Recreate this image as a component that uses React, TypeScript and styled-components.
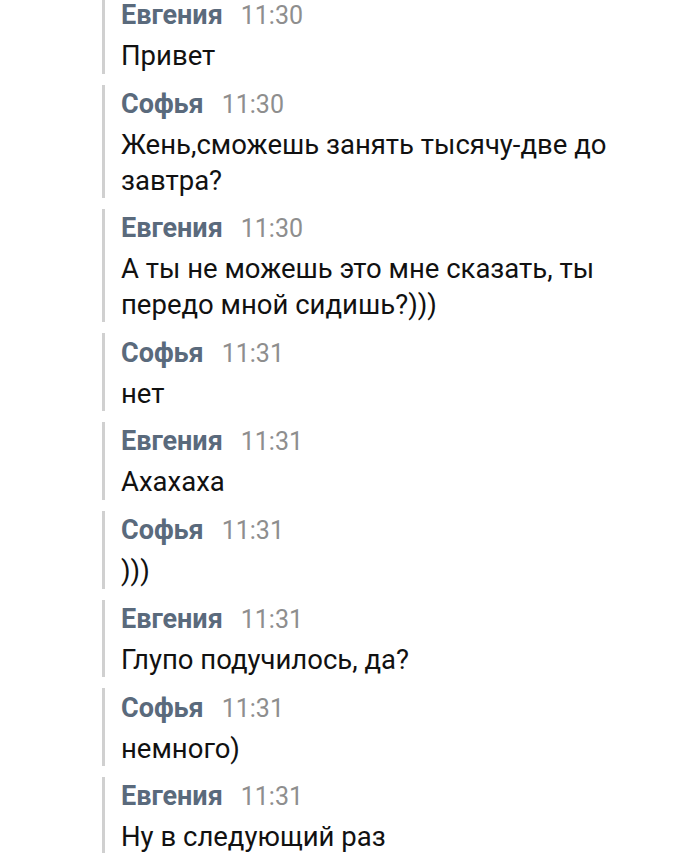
import React from "react";
import styled, { createGlobalStyle } from "styled-components";

const Global = createGlobalStyle`
  html, body { margin: 0; padding: 0; background: #ffffff; }
  body { font-family: Roboto, "Noto Sans", "Liberation Sans", sans-serif; overflow: hidden; }
`;

const Page = styled.div`
  width: 700px;
  height: 853px;
  overflow: hidden;
  background: #ffffff;
`;

const List = styled.div`
  display: flex;
  flex-direction: column;
  gap: 11px;
  padding-left: 102px;
  margin-top: -4px;
`;

const Message = styled.div`
  display: flex;
  flex-direction: column;
  border-left: 3px solid #d0d0d0;
  padding: 4.25px 0 0 16px;
  width: 520px;
`;

const Header = styled.div`
  display: flex;
  align-items: baseline;
  gap: 18px;
  height: 30px;
  line-height: 30px;
`;

const Name = styled.span`
  font-weight: 700;
  font-size: 27px;
  color: #5a6a7c;
`;

const Time = styled.span`
  font-weight: 400;
  font-size: 25px;
  color: #8e8e8e;
`;

const Text = styled.div`
  margin-top: 8px;
  font-size: 27.5px;
  line-height: 35.5px;
  color: #111111;
`;

type Msg = { name: string; time: string; text: string };

const messages: Msg[] = [
  { name: "Евгения", time: "11:30", text: "Привет" },
  { name: "Софья", time: "11:30", text: "Жень,сможешь занять тысячу-две до завтра?" },
  { name: "Евгения", time: "11:30", text: "А ты не можешь это мне сказать, ты передо мной сидишь?)))" },
  { name: "Софья", time: "11:31", text: "нет" },
  { name: "Евгения", time: "11:31", text: "Ахахаха" },
  { name: "Софья", time: "11:31", text: ")))" },
  { name: "Евгения", time: "11:31", text: "Глупо подучилось, да?" },
  { name: "Софья", time: "11:31", text: "немного)" },
  { name: "Евгения", time: "11:31", text: "Ну в следующий раз" },
];

export default function App() {
  return (
    <Page>
      <Global />
      <List>
        {messages.map((m, i) => (
          <Message key={i}>
            <Header>
              <Name>{m.name}</Name>
              <Time>{m.time}</Time>
            </Header>
            <Text>{m.text}</Text>
          </Message>
        ))}
      </List>
    </Page>
  );
}
